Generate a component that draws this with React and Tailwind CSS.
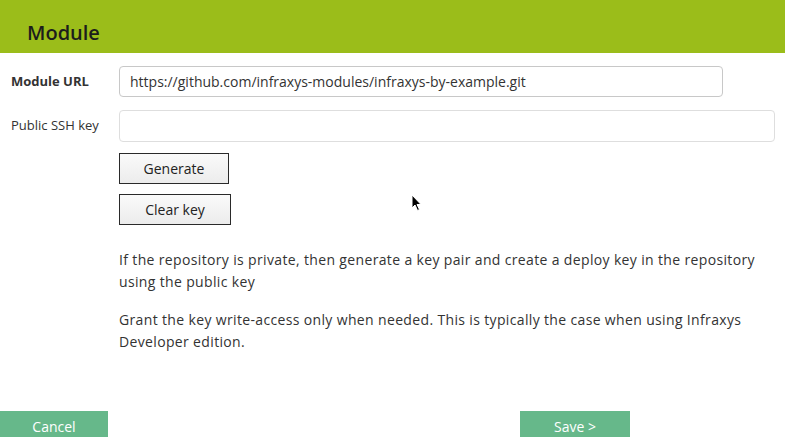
export default function App() {
  const font = { fontFamily: '"Open Sans", "Noto Sans", sans-serif' };
  return (
    <div className="relative w-[785px] h-[437px] overflow-hidden bg-white text-[#333]" style={font}>
      <div className="h-[53px] bg-[#9bbd1a] flex items-center pl-[27px] pt-[12px]">
        <h1 className="text-[20px] font-semibold text-[#1c1c1c] leading-none">Module</h1>
      </div>
      <div className="flex flex-col pt-[13px]">
        <div className="flex items-center h-[31px]">
          <label className="w-[119px] pl-[11px] text-[13px] font-bold text-[#333]">Module URL</label>
          <div className="w-[604px] h-[31px] border border-[#c8c8c8] rounded-[4px] flex items-center px-[10px] text-[14px] text-[#333]">
            https://github.com/infraxys-modules/infraxys-by-example.git
          </div>
        </div>
        <div className="flex items-center h-[32px] mt-[13px]">
          <label className="w-[119px] pl-[11px] text-[13px] text-[#333]">Public SSH key</label>
          <div className="w-[656px] h-[32px] border border-[#dedede] rounded-[4px]"></div>
        </div>
        <div className="pl-[119px] mt-[11px] flex flex-col gap-[10px] items-start">
          <button className="w-[110px] h-[31px] border border-[#2a2a2a] bg-gradient-to-b from-[#fafafa] to-[#ececec] text-[14px] text-[#222]">Generate</button>
          <button className="w-[112px] h-[31px] border border-[#2a2a2a] bg-gradient-to-b from-[#fafafa] to-[#ececec] text-[14px] text-[#222]">Clear key</button>
        </div>
        <div className="pl-[119px] pr-[12px] mt-[24px] text-[14px] leading-[22px] text-[#333] tracking-[0.35px]">
          <p>If the repository is private, then generate a key pair and create a deploy key in the repository using the public key</p>
          <p className="mt-[16px]">Grant the key write-access only when needed. This is typically the case when using Infraxys Developer edition.</p>
        </div>
      </div>
      <div className="absolute left-0 right-0 top-[411px] flex">
        <button className="w-[108px] h-[30px] bg-[#66b88a] text-white text-[14px]">Cancel</button>
        <div className="w-[412px]"></div>
        <button className="w-[110px] h-[30px] bg-[#66b88a] text-white text-[14px]">Save &gt;</button>
      </div>
      <svg className="absolute left-[411px] top-[194px]" width="12" height="18" viewBox="0 0 12 18">
        <path d="M1 1 L1 14 L4 11 L6.5 16.5 L8.5 15.5 L6 10.5 L10 10.5 Z" fill="#000" stroke="#fff" strokeWidth="1" />
      </svg>
    </div>
  );
}
